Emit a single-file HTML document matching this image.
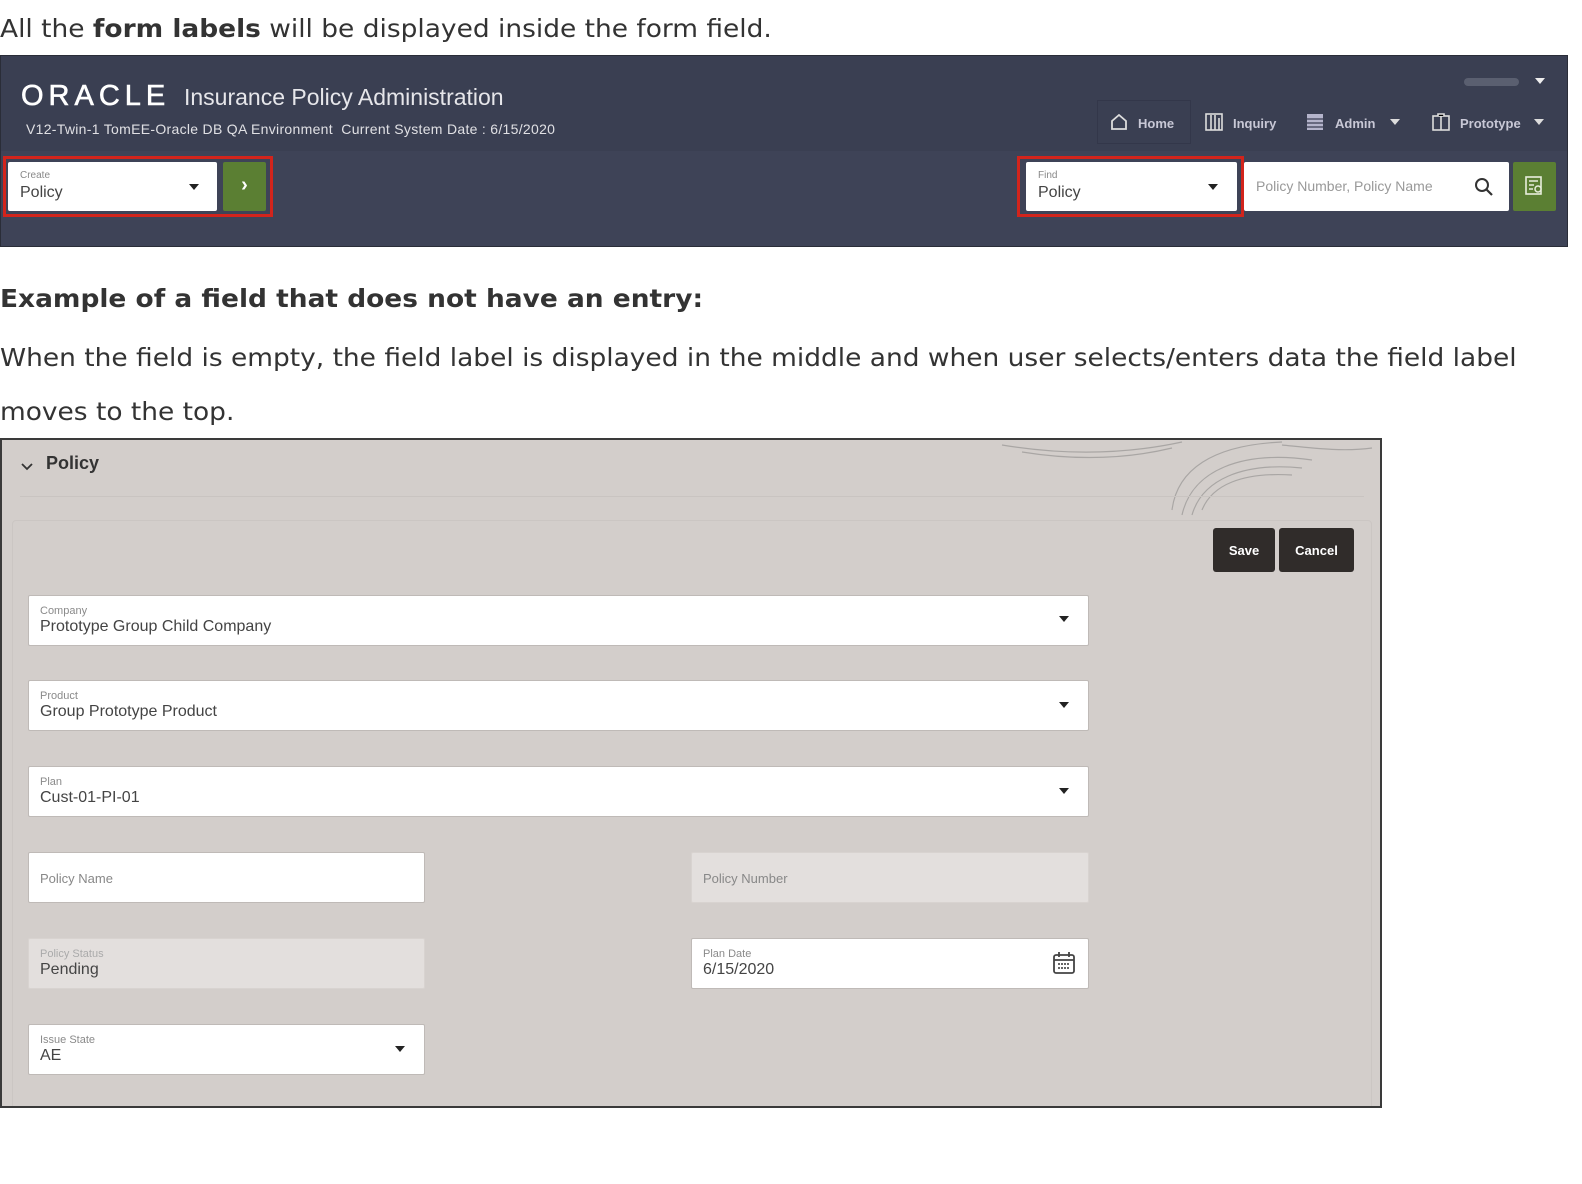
<!DOCTYPE html>
<html><head><meta charset="utf-8"><style>
*{margin:0;padding:0;box-sizing:border-box}
body{width:1582px;height:1184px;background:#fff;position:relative;overflow:hidden;font-family:"DejaVu Sans Condensed","DejaVu Sans","Liberation Sans",sans-serif;color:#333}
.t{position:absolute;left:0;font-size:25px;white-space:nowrap;line-height:1;transform:scaleX(1.175);transform-origin:0 0}
.ui{font-family:"Liberation Sans",sans-serif}
.abs{position:absolute}
.hdr{position:absolute;left:0;top:55px;width:1568px;height:192px;background:linear-gradient(#3a3f52 0,#3a3f52 95px,#3e4357 95px,#3e4357 100%);border:1px solid #2a2d38}
.wf{position:absolute;background:#fff;border-radius:2px}
.lbl{position:absolute;left:12px;top:8px;font-size:10px;color:#888}
.val{position:absolute;left:12px;top:22px;font-size:16px;color:#444}
.car{position:absolute;width:0;height:0;border-left:5px solid transparent;border-right:5px solid transparent;border-top:6px solid #222}
.panel{position:absolute;left:0;top:438px;width:1382px;height:670px;background:#d3cecb;border:2px solid #3a3a3a;overflow:hidden}
.f{position:absolute;background:#fff;border:1px solid #bfbab7;border-radius:2px;height:51px}
.f.d{background:#e3dfdd;border-color:#d8d3d0}
.f .lbl{left:11px;top:9px;font-size:11px;color:#8a8a8a}
.f .val{left:11px;top:22px;font-size:16px;color:#444}
.f .ph{position:absolute;left:11px;top:18px;font-size:13px;color:#888}
.btn{position:absolute;top:528px;height:44px;background:#302c2a;color:#fff;border-radius:3px;font-size:13px;font-weight:bold;display:flex;align-items:center;justify-content:center}
</style></head><body>
<div class="t" style="top:16px">All the <b>form labels</b> will be displayed inside the form field.</div>

<div class="hdr ui">
  <div class="abs" style="left:20px;top:24px;color:#fff;font-size:29px;letter-spacing:5px;font-weight:normal;-webkit-text-stroke:0.6px #fff">ORACLE</div>
  <div class="abs" style="left:183px;top:28px;color:#e6e6ea;font-size:23px">Insurance Policy Administration</div>
  <div class="abs" style="left:25px;top:65px;color:#e0e0e4;font-size:14px;letter-spacing:0.3px">V12-Twin-1 TomEE-Oracle DB QA Environment&nbsp; Current System Date : 6/15/2020</div>
  <div class="abs" style="left:1463px;top:22px;width:55px;height:8px;border-radius:4px;background:#5a5f70"></div>
  <div class="car" style="left:1534px;top:22px;border-top-color:#eee"></div>
  <div class="abs" style="left:1096px;top:44px;width:94px;height:44px;border:1px solid #33374a"></div>
  <svg class="abs" style="left:1109px;top:58px" width="18" height="16"><path d="M2 15V7L9 1l7 6v8z" fill="none" stroke="#ddd" stroke-width="1.8"/></svg>
  <div class="abs" style="left:1137px;top:60px;color:#c8c8d6;font-size:13px;font-weight:bold">Home</div>
  <svg class="abs" style="left:1204px;top:57px" width="18" height="18"><rect x="1" y="1" width="16" height="16" fill="none" stroke="#ddd" stroke-width="1.6"/><path d="M6 2v15M10 2v15M14 5v12" stroke="#ddd" stroke-width="1.6"/></svg>
  <div class="abs" style="left:1232px;top:60px;color:#c8c8d6;font-size:13px;font-weight:bold">Inquiry</div>
  <svg class="abs" style="left:1305px;top:57px" width="18" height="18"><rect x="1" y="1" width="16" height="16" fill="#b5b5cc"/><path d="M1 6h16M1 10h16M1 14h16" stroke="#3a3f52" stroke-width="1.2"/></svg>
  <div class="abs" style="left:1334px;top:60px;color:#c8c8d6;font-size:13px;font-weight:bold">Admin</div>
  <div class="car" style="left:1389px;top:63px;border-top-color:#ddd"></div>
  <svg class="abs" style="left:1431px;top:57px" width="18" height="18"><rect x="1" y="3" width="16" height="14" fill="none" stroke="#ddd" stroke-width="1.6"/><path d="M6 3V1h6v2M9 3v14" stroke="#ddd" stroke-width="1.6"/></svg>
  <div class="abs" style="left:1459px;top:60px;color:#c8c8d6;font-size:13px;font-weight:bold">Prototype</div>
  <div class="car" style="left:1533px;top:63px;border-top-color:#ddd"></div>

  <div class="abs" style="left:2px;top:100px;width:270px;height:61px;border:3px solid #d2241c"></div>
  <div class="wf" style="left:7px;top:106px;width:209px;height:49px"><div class="lbl">Create</div><div class="val">Policy</div><div class="car" style="left:181px;top:22px"></div></div>
  <div class="abs" style="left:222px;top:106px;width:43px;height:49px;background:#5b7f33;border-radius:2px;color:#fff;font-size:20px;font-weight:bold;text-align:center;line-height:47px">›</div>

  <div class="abs" style="left:1016px;top:100px;width:227px;height:61px;border:3px solid #d2241c"></div>
  <div class="wf" style="left:1025px;top:106px;width:211px;height:49px"><div class="lbl">Find</div><div class="val">Policy</div><div class="car" style="left:182px;top:22px"></div></div>
  <div class="wf" style="left:1243px;top:106px;width:265px;height:49px"><div class="abs" style="left:12px;top:16px;font-size:14px;color:#999">Policy Number, Policy Name</div>
  <svg class="abs" style="left:230px;top:15px" width="20" height="20"><circle cx="8" cy="8" r="6" fill="none" stroke="#333" stroke-width="2"/><path d="M12.5 12.5L18 18" stroke="#333" stroke-width="2.2"/></svg></div>
  <div class="abs" style="left:1512px;top:106px;width:43px;height:49px;background:#5b7f33;border-radius:2px"><svg class="abs" style="left:12px;top:14px" width="20" height="20"><rect x="1" y="1" width="15" height="17" fill="none" stroke="#e8eedd" stroke-width="1.6"/><path d="M4 5h9M4 9h5M4 13h4" stroke="#e8eedd" stroke-width="1.4"/><circle cx="13" cy="13" r="3" fill="#5b7f33" stroke="#e8eedd" stroke-width="1.5"/></svg></div>
</div>

<div class="t" style="top:286px;font-weight:bold">Example of a field that does not have an entry:</div>
<div class="t" style="top:345px">When the field is empty, the field label is displayed in the middle and when user selects/enters data the field label</div>
<div class="t" style="top:399px">moves to the top.</div>

<div class="panel ui">
  <svg class="abs" style="left:980px;top:0" width="400" height="80" opacity="0.45"><g fill="none" stroke="#777" stroke-width="1.2"><path d="M200 75C210 30 260 10 330 20M210 75C220 40 260 22 320 28M190 70C195 30 230 5 300 2M220 70C230 45 260 32 310 35M20 5C80 15 140 15 200 2M40 12C90 20 140 20 190 8M300 5C330 8 360 12 390 8"/></g></svg>
  <svg class="abs" style="left:18px;top:22px" width="14" height="10"><path d="M2 2l5 5 5-5" fill="none" stroke="#333" stroke-width="1.8"/></svg>
  <div class="abs" style="left:44px;top:13px;font-size:18px;font-weight:bold;color:#333">Policy</div>
  <div class="abs" style="left:18px;top:56px;width:1344px;height:1px;background:#c9c4c1"></div>
  <div class="abs" style="left:10px;top:80px;width:1360px;height:600px;border:1px solid #cbc6c3;border-radius:4px"></div>
</div>
<div class="btn ui" style="left:1213px;width:62px">Save</div>
<div class="btn ui" style="left:1279px;width:75px">Cancel</div>

<div class="ui">
<div class="f" style="left:28px;top:595px;width:1061px"><div class="lbl">Company</div><div class="val">Prototype Group Child Company</div><div class="car" style="left:1030px;top:20px"></div></div>
<div class="f" style="left:28px;top:680px;width:1061px"><div class="lbl">Product</div><div class="val">Group Prototype Product</div><div class="car" style="left:1030px;top:21px"></div></div>
<div class="f" style="left:28px;top:766px;width:1061px"><div class="lbl">Plan</div><div class="val">Cust-01-PI-01</div><div class="car" style="left:1030px;top:21px"></div></div>
<div class="f" style="left:28px;top:852px;width:397px"><div class="ph">Policy Name</div></div>
<div class="f d" style="left:691px;top:852px;width:398px"><div class="ph">Policy Number</div></div>
<div class="f d" style="left:28px;top:938px;width:397px"><div class="lbl" style="color:#aaa">Policy Status</div><div class="val">Pending</div></div>
<div class="f" style="left:691px;top:938px;width:398px"><div class="lbl">Plan Date</div><div class="val">6/15/2020</div>
<svg class="abs" style="left:361px;top:12px" width="22" height="24"><rect x="1" y="4" width="20" height="18" rx="2" fill="none" stroke="#444" stroke-width="1.8"/><path d="M6 1v5M16 1v5M1 9h20" stroke="#444" stroke-width="1.8"/><path d="M5 13h12M5 17h12" stroke="#666" stroke-width="2" stroke-dasharray="2 1"/></svg></div>
<div class="f" style="left:28px;top:1024px;width:397px"><div class="lbl">Issue State</div><div class="val">AE</div><div class="car" style="left:366px;top:21px"></div></div>
</div>
</body></html>
